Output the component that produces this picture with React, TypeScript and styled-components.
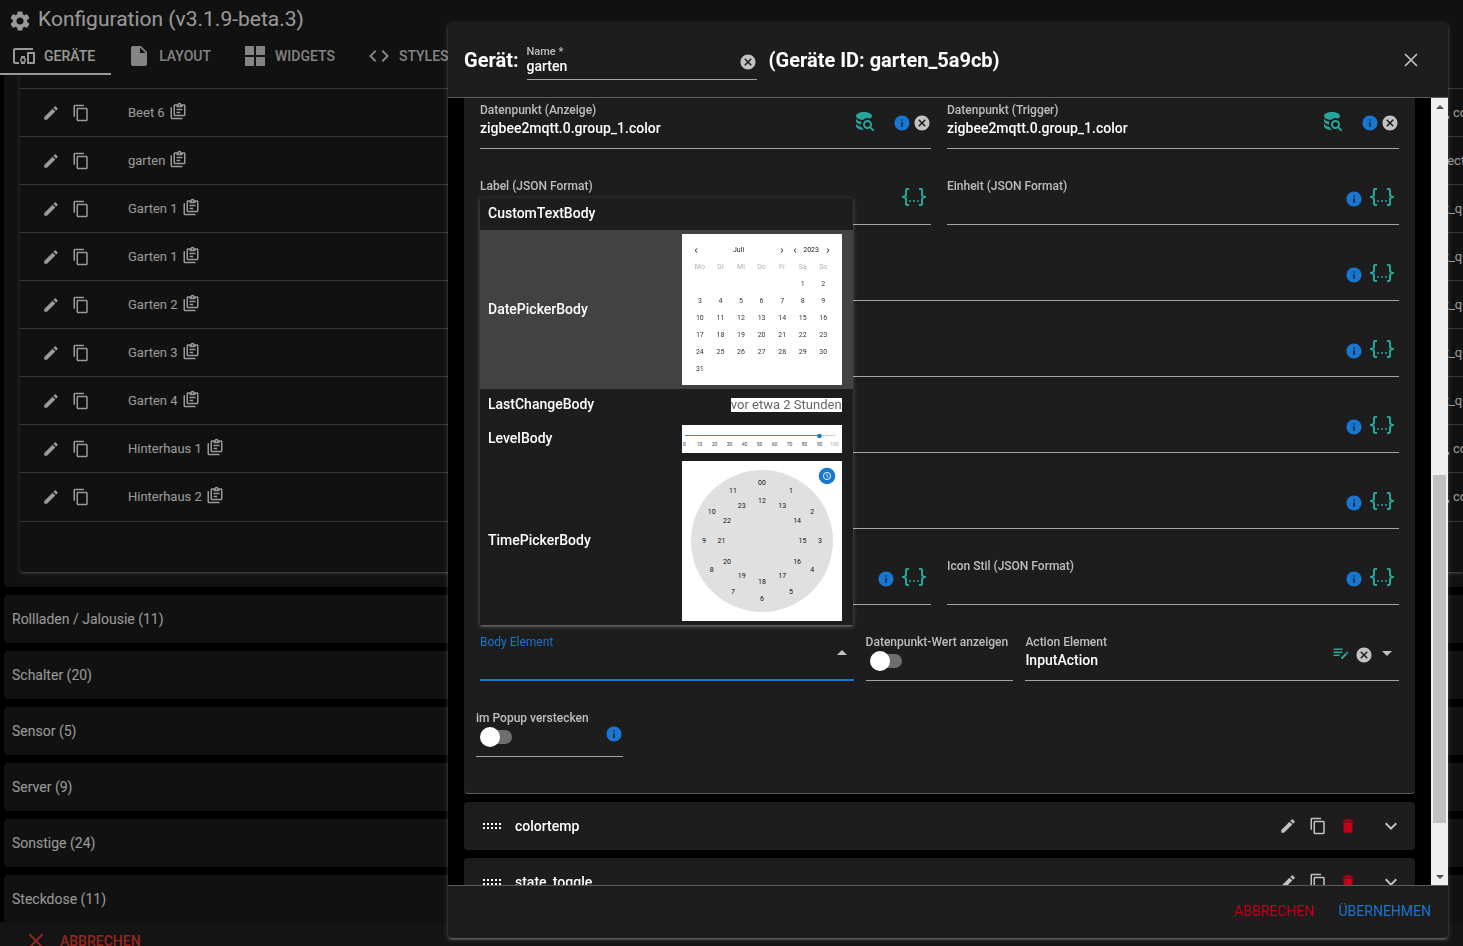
import React, { useId } from "react";
import styled, { createGlobalStyle } from "styled-components";
import {
  MdSettings,
  MdOutlineDevicesOther,
  MdInsertDriveFile,
  MdCode,
  MdEdit,
  MdContentCopy,
  MdCancel,
  MdInfo,
  MdDelete,
  MdArrowDropDown,
  MdArrowDropUp,
} from "react-icons/md";

const color = {
  surface: "#1d1d1d",
  line: "rgba(255, 255, 255, 0.28)",
  fieldLine: "rgba(255, 255, 255, 0.6)",
  label: "rgba(255, 255, 255, 0.7)",
  icon: "#c2c2c2",
  primary: "#1976d2",
  negative: "#c10015",
  teal: "#26a69a",
};

const glow =
  "0 1px 5px rgba(255,255,255,0.2), 0 2px 2px rgba(255,255,255,0.14), 0 3px 1px -2px rgba(255,255,255,0.12)";

const GlobalStyle = createGlobalStyle`
  * { box-sizing: border-box; }
  html, body, #root { height: 100%; }
  body {
    margin: 0;
    overflow: hidden;
    background: #000;
    color: #fff;
    font: 14px/20px Roboto, "Liberation Sans", sans-serif;
  }
  button, input, select { font: inherit; color: inherit; }
  svg { display: block; flex: none; }
`;

/* ---------- Icons ---------- */

const MdiIcon = ({ d, size = 24 }: { d: string; size?: number }) => (
  <svg width={size} height={size} viewBox="0 0 24 24" fill="currentColor" aria-hidden="true">
    <path d={d} />
  </svg>
);

const mdi = {
  json: "M5,3H7V5H5V10A2,2 0 0,1 3,12A2,2 0 0,1 5,14V19H7V21H5C3.93,20.73 3,20.1 3,19V15A2,2 0 0,0 1,13H0V11H1A2,2 0 0,0 3,9V5A2,2 0 0,1 5,3M19,3A2,2 0 0,1 21,5V9A2,2 0 0,0 23,11H24V13H23A2,2 0 0,0 21,15V19A2,2 0 0,1 19,21H17V19H19V14A2,2 0 0,1 21,12A2,2 0 0,1 19,10V5H17V3H19M12,15A1,1 0 0,1 13,16A1,1 0 0,1 12,17A1,1 0 0,1 11,16A1,1 0 0,1 12,15M8,15A1,1 0 0,1 9,16A1,1 0 0,1 8,17A1,1 0 0,1 7,16A1,1 0 0,1 8,15M16,15A1,1 0 0,1 17,16A1,1 0 0,1 16,17A1,1 0 0,1 15,16A1,1 0 0,1 16,15Z",
  dbSearch:
    "M18.68,12.32C16.92,10.56 14.07,10.57 12.32,12.33C10.56,14.09 10.56,16.94 12.32,18.69C13.81,20.17 16.11,20.43 17.89,19.32L21,22.39L22.39,21L19.3,17.89C20.43,16.12 20.17,13.8 18.68,12.32M17.27,17.27C16.29,18.25 14.71,18.24 13.73,17.27C12.76,16.29 12.76,14.71 13.74,13.73C14.71,12.76 16.29,12.76 17.27,13.73C18.24,14.71 18.24,16.29 17.27,17.27M10.9,20.1C10.25,19.44 9.74,18.65 9.42,17.78C6.27,17.25 4,15.76 4,14V17C4,19.21 7.58,21 12,21V21C11.6,20.74 11.23,20.44 10.9,20.1M4,9V12C4,13.68 6.07,15.12 9,15.7C9,15.63 9,15.57 9,15.5C9,14.57 9.2,13.65 9.58,12.81C6.34,12.3 4,10.79 4,9M12,3C7.58,3 4,4.79 4,7C4,9 7,10.68 10.85,11H10.9C12.1,9.74 13.76,9 15.5,9C16.41,9 17.31,9.19 18.14,9.56C19.17,9.09 19.87,8.12 20,7C20,4.79 16.42,3 12,3Z",
  textEdit:
    "M2,6V8H14V6H2M2,10V12H14V10H2M20.04,10.13C19.9,10.13 19.76,10.19 19.65,10.3L18.65,11.3L20.7,13.35L21.7,12.35C21.92,12.14 21.92,11.79 21.7,11.58L20.42,10.3C20.31,10.19 20.18,10.13 20.04,10.13M18.07,11.88L12,17.94V20H14.06L20.12,13.93L18.07,11.88M2,14V16H10V14H2Z",
  clipboard:
    "M4 7V21H18V23H4C2.9 23 2 22.1 2 21V7H4M20 3C21.1 3 22 3.9 22 5V17C22 18.1 21.1 19 20 19H8C6.9 19 6 18.1 6 17V5C6 3.9 6.9 3 8 3H11.18C11.6 1.84 12.7 1 14 1C15.3 1 16.4 1.84 16.82 3H20M14 3C13.45 3 13 3.45 13 4C13 4.55 13.45 5 14 5C14.55 5 15 4.55 15 4C15 3.45 14.55 3 14 3M10 7V5H8V17H20V5H18V7M15 15H10V13H15M18 11H10V9H18V11Z",
  viewGrid: "M2 2H11V11H2V2M13 2H22V11H13V2M2 13H11V22H2V13M13 13H22V22H13V13Z",
};

const CrossIcon = ({ size }: { size: number }) => (
  <svg width={size} height={size} viewBox="0 0 14 14" fill="none" stroke="currentColor" strokeWidth="1.7" aria-hidden="true">
    <path d="M1 1L13 13M13 1L1 13" />
  </svg>
);

const ChevronIcon = () => (
  <svg width="24" height="24" viewBox="0 0 24 24" fill="none" stroke="currentColor" strokeWidth="2" aria-hidden="true">
    <path d="M6.7 9.3L12 14.6L17.3 9.3" />
  </svg>
);

const TinyChevron = ({ next }: { next?: boolean }) => (
  <svg width="4" height="6" viewBox="0 0 4 6" fill="none" stroke="#222" aria-hidden="true">
    <path d={next ? "M0.800 0.500L3 2.500L0.800 4.500" : "M3.200 0.500L1 2.500L3.200 4.500"} />
  </svg>
);

const HandleIcon = () => (
  <svg width="18" height="6" viewBox="0 0 18 6" fill="#fff" aria-hidden="true">
    {[0, 4, 8, 12, 16].map((x) => (
      <React.Fragment key={x}>
        <rect x={x} y="0" width="2" height="2" />
        <rect x={x} y="4" width="2" height="2" />
      </React.Fragment>
    ))}
  </svg>
);

/* ---------- Page behind the dialog ---------- */

const Page = styled.div`
  display: flex;
  flex-direction: column;
  height: 100vh;
  overflow: hidden;
  background: #000;
`;

const PageHeader = styled.header`
  flex: none;
  background: ${color.surface};
`;

const PageTitle = styled.h1`
  display: flex;
  align-items: center;
  gap: 6px;
  height: 38px;
  margin: 0;
  padding-left: 8px;
  font-size: 21px;
  font-weight: 400;
  & > svg {
    margin-top: 4px;
  }
`;

const Tabs = styled.nav`
  display: flex;
  height: 37px;
`;

const Tab = styled.a<{ $active?: boolean }>`
  display: flex;
  align-items: center;
  gap: 8px;
  padding: 0 16px 0 ${(p) => (p.$active ? 12 : 16)}px;
  border-bottom: 2px solid ${(p) => (p.$active ? "#fff" : "transparent")};
  font-weight: 500;
  text-decoration: none;
  color: ${(p) => (p.$active ? "#fff" : "rgba(255, 255, 255, 0.85)")};
`;

const PageBody = styled.main`
  flex: 1;
  min-height: 0;
  overflow: hidden;
  display: flex;
  flex-direction: column;
  gap: 8px;
  padding-left: 4px;
`;

const OpenSection = styled.section`
  flex: none;
  padding: 0 0 15px 16px;
  background: ${color.surface};
  border-radius: 0 0 0 4px;
`;

const DeviceTable = styled.table`
  width: 100%;
  border-spacing: 0;
  border-radius: 0 0 0 4px;
  box-shadow: ${glow};
  font-size: 13px;
  table-layout: fixed;
`;

const Cell = styled.td<{ $h?: number }>`
  height: ${(p) => p.$h ?? 48}px;
  padding: 0;
  border-bottom: 1px solid ${color.line};
  white-space: nowrap;
  overflow: hidden;
  tr:last-child > & {
    border-bottom: 0;
  }
`;

const RowActions = styled.div`
  display: flex;
  align-items: center;
  gap: 12px;
  padding-left: 22px;
`;

const NameLine = styled.div`
  display: flex;
  align-items: center;
  gap: 4px;
  & > svg {
    margin-bottom: 4px;
  }
`;

const IconButton = styled.button<{ $color?: string }>`
  display: flex;
  padding: 0;
  border: 0;
  background: none;
  cursor: pointer;
  color: ${(p) => p.$color ?? "#fff"};
`;

const ClosedSection = styled.button`
  flex: none;
  height: 48px;
  padding: 0 8px;
  border: 0;
  border-radius: 4px 0 0 4px;
  background: ${color.surface};
  text-align: left;
`;

const PageFooter = styled.footer`
  flex: 0 0 24px;
  overflow: hidden;
  padding: 9px 28px 0;
  background: #222;
`;

const PageCancel = styled.button`
  display: flex;
  align-items: center;
  gap: 16px;
  padding: 0;
  border: 0;
  background: none;
  color: #f44336;
  font-weight: 500;
  line-height: 20px;
`;

/* ---------- Dialog ---------- */

const Backdrop = styled.div`
  position: fixed;
  inset: 0;
  display: flex;
  justify-content: flex-end;
  padding: 23px 15px 8px;
  background: rgba(0, 0, 0, 0.4);
`;

const Dialog = styled.div`
  flex: 0 1 1000px;
  min-width: 0;
  display: flex;
  flex-direction: column;
  overflow: hidden;
  border-radius: 4px;
  background: ${color.surface};
  box-shadow: ${glow};
`;

const DialogHeader = styled.header`
  flex: none;
  display: flex;
  align-items: center;
  height: 75px;
  padding: 0 30px 0 16px;
  border-bottom: 1px solid ${color.line};
`;

const DialogTitle = styled.h2`
  margin: 0;
  font-size: 20px;
  font-weight: 700;
  white-space: nowrap;
`;

const NameField = styled.div`
  display: flex;
  align-items: center;
  width: 230px;
  height: 40px;
  margin: 0 12px 0 8px;
  padding-top: 5px;
  border-bottom: 1px solid ${color.fieldLine};
`;

const NameMain = styled.div`
  flex: 1;
  display: flex;
  flex-direction: column;
  padding-bottom: 5px;
`;

const NameLabel = styled.label`
  font-size: 11px;
  line-height: 12px;
  font-weight: 500;
  color: ${color.label};
`;

const Spacer = styled.div`
  flex: 1;
`;

const DialogMain = styled.div`
  flex: 1;
  min-height: 0;
  display: flex;
  background: #000;
`;

const DialogContent = styled.div`
  flex: 1;
  min-width: 0;
  overflow: hidden;
  display: flex;
  flex-direction: column;
  gap: 8px;
  padding: 0 16px;
`;

const Panel = styled.section`
  flex: none;
  padding: 0 16px 36px;
  background: ${color.surface};
  border-bottom: 1px solid ${color.line};
  border-radius: 0 0 4px 4px;
`;

const FormGrid = styled.form`
  display: grid;
  gap: 25px 16px;
  grid-template-columns: 451fr 452fr;
`;

const Wide = styled.div`
  grid-column: 1 / -1;
`;

const ElementRow = styled.div`
  grid-column: 1 / -1;
  display: grid;
  grid-template-columns: 374fr 148fr 374fr;
  gap: 12px;
`;

const HideRow = styled.div`
  grid-column: 1 / -1;
  width: 147px;
  margin-left: -4px;
`;

const FieldBox = styled.div<{ $focused?: boolean }>`
  position: relative;
  display: flex;
  height: 51px;
  border-bottom: ${(p) => (p.$focused ? `2px solid ${color.primary}` : `1px solid ${color.fieldLine}`)};
`;

const FieldMain = styled.div`
  flex: 1;
  min-width: 0;
  display: flex;
  flex-direction: column;
  padding-top: 5px;
`;

const FieldLabel = styled.label<{ $focused?: boolean }>`
  font-size: 12px;
  line-height: 14px;
  font-weight: ${(p) => (p.$focused ? 400 : 500)};
  white-space: nowrap;
  color: ${(p) => (p.$focused ? color.primary : color.label)};
`;

const TextInput = styled.input<{ $dense?: boolean }>`
  width: 100%;
  height: ${(p) => (p.$dense ? 16 : 22)}px;
  padding: 0;
  border: 0;
  outline: 0;
  background: none;
  font-weight: 500;
`;

const SelectInput = styled.select`
  width: 100%;
  height: 22px;
  padding: 0;
  border: 0;
  outline: 0;
  appearance: none;
  background: none;
  font-weight: 500;
`;

const Adornments = styled.div<{ $gap?: number; $right?: number }>`
  display: flex;
  align-items: center;
  gap: ${(p) => p.$gap ?? 2}px;
  padding-right: ${(p) => p.$right ?? 0}px;
`;

const ArrowBox = styled.span`
  padding-bottom: 4px;
  color: ${color.icon};
`;

const TealButton = styled(IconButton)<{ $after?: number }>`
  padding-bottom: 4px;
  margin-right: ${(p) => p.$after ?? 0}px;
  color: ${color.teal};
`;

const Switch = styled.input`
  appearance: none;
  display: grid;
  align-items: center;
  width: 32px;
  height: 20px;
  margin: 2px 4px 0;
  &::before,
  &::after {
    content: "";
    grid-area: 1 / 1;
  }
  &::before {
    height: 14px;
    margin-left: 4px;
    border-radius: 7px;
    background: #6e6e6e;
  }
  &::after {
    width: 20px;
    height: 20px;
    border-radius: 50%;
    background: #fff;
  }
`;

const ToggleInfo = styled.div`
  padding-top: 19px;
`;

const Options = styled.ul`
  position: absolute;
  left: 0;
  right: 1px;
  bottom: 54px;
  margin: 0;
  padding: 0;
  list-style: none;
  background: ${color.surface};
  box-shadow: ${glow};
`;

const Option = styled.li<{ $active?: boolean }>`
  display: flex;
  align-items: center;
  justify-content: space-between;
  min-height: 32px;
  padding: 4px 11px 4px 8px;
  background: ${(p) => (p.$active ? "#424242" : "transparent")};
`;

const OptionName = styled.span`
  padding-bottom: 2px;
  font-weight: 500;
`;

const Calendar = styled.div`
  width: 160px;
  height: 151px;
  padding: 8px 8px 0;
  background: #fff;
  font-size: 7px;
  line-height: 17px;
  text-align: center;
`;

const CalendarNav = styled.div`
  display: flex;
  justify-content: space-between;
  align-items: center;
  height: 17px;
  padding: 0 4px;
`;

const NavGroup = styled.div<{ $w: number }>`
  display: flex;
  justify-content: space-between;
  align-items: center;
  width: ${(p) => p.$w}px;
  color: #222;
`;

const Days = styled.div<{ $muted?: boolean }>`
  display: grid;
  grid-template-columns: repeat(7, 1fr);
  color: ${(p) => (p.$muted ? "#b0b0b0" : "#333")};
`;

const LastChange = styled.span`
  background: #fff;
  color: #666;
  font-size: 13px;
  line-height: 14px;
`;

const SubCard = styled.section`
  flex: none;
  display: flex;
  align-items: center;
  height: 48px;
  padding: 0 12px 0 19px;
  border-radius: 4px;
  background: ${color.surface};
`;

const SubName = styled.span`
  flex: 1;
  padding-left: 14px;
  font-weight: 500;
`;

const SubActions = styled.div`
  display: flex;
  align-items: center;
  gap: 12px;
  padding-right: 22px;
`;

const ScrollRail = styled.div`
  flex: 0 0 17px;
  display: flex;
  flex-direction: column;
  align-items: center;
  background: #f0f0f0;
`;

const ScrollArrow = styled.div`
  display: flex;
  align-items: center;
  height: 17px;
`;

const ScrollThumb = styled.div`
  flex: 348;
  width: 13px;
  background: #c1c1c1;
`;

const ScrollGap = styled.div<{ $grow: number }>`
  flex: ${(p) => p.$grow};
`;

const DialogFooter = styled.footer`
  flex: none;
  display: flex;
  align-items: center;
  justify-content: flex-end;
  gap: 24px;
  height: 53px;
  padding: 0 17px 2px;
  border-top: 1px solid ${color.line};
`;

const FlatButton = styled.button<{ $color: string }>`
  padding: 0;
  border: 0;
  background: none;
  color: ${(p) => p.$color};
`;

/* ---------- Parts ---------- */

const Info = () => <MdInfo size={18} color={color.primary} />;

const Clear = () => (
  <IconButton type="button" aria-label="Leeren" $color={color.icon}>
    <MdCancel size={18} />
  </IconButton>
);

interface FieldProps {
  label: string;
  value?: string;
  children?: React.ReactNode;
}

const Field = ({ label, value = "", children }: FieldProps) => {
  const id = useId();
  return (
    <FieldBox>
      <FieldMain>
        <FieldLabel htmlFor={id}>{label}</FieldLabel>
        <TextInput id={id} defaultValue={value} />
      </FieldMain>
      {children}
    </FieldBox>
  );
};

const DatapointField = ({ label }: { label: string }) => (
  <Field label={label} value="zigbee2mqtt.0.group_1.color">
    <Adornments>
      <TealButton type="button" aria-label="Datenpunkt suchen" $after={15}>
        <MdiIcon d={mdi.dbSearch} />
      </TealButton>
      <Info />
      <Clear />
    </Adornments>
  </Field>
);

const JsonField = ({ label, info = true }: { label: string; info?: boolean }) => (
  <Field label={label}>
    <Adornments $gap={7} $right={5}>
      {info && <Info />}
      <TealButton type="button" aria-label="JSON bearbeiten">
        <MdiIcon d={mdi.json} />
      </TealButton>
    </Adornments>
  </Field>
);

const ToggleField = ({ label, info }: { label: string; info?: boolean }) => {
  const id = useId();
  return (
    <FieldBox>
      <FieldMain>
        <FieldLabel htmlFor={id}>{label}</FieldLabel>
        <Switch id={id} type="checkbox" />
      </FieldMain>
      {info && (
        <ToggleInfo>
          <Info />
        </ToggleInfo>
      )}
    </FieldBox>
  );
};

const CalendarPreview = () => (
  <Calendar>
    <CalendarNav>
      <NavGroup $w={90}>
        <TinyChevron />
        <span>Juli</span>
        <TinyChevron next />
      </NavGroup>
      <NavGroup $w={37}>
        <TinyChevron />
        <span>2023</span>
        <TinyChevron next />
      </NavGroup>
    </CalendarNav>
    <Days $muted>
      {["Mo", "Di", "Mi", "Do", "Fr", "Sa", "So"].map((d) => (
        <span key={d}>{d}</span>
      ))}
    </Days>
    <Days>
      {Array.from({ length: 36 }, (_, i) => (
        <span key={i}>{i > 4 ? i - 4 : ""}</span>
      ))}
    </Days>
  </Calendar>
);

const LevelPreview = () => (
  <svg width="160" height="28" viewBox="0 0 160 28" fontSize="5" textAnchor="middle">
    <rect width="160" height="28" fill="#fff" />
    <path d="M3 10.5H154" stroke="#bcd6f1" />
    <path d="M3 10.5H137" stroke="#3c8ad8" />
    <circle cx="137.500" cy="11" r="2.300" fill={color.primary} />
    {Array.from({ length: 11 }, (_, i) => (
      <text key={i} x={2.5 + i * 15} y="20.500" fill={i === 10 ? "#aaa" : "#444"}>
        {i * 10}
      </text>
    ))}
  </svg>
);

const ClockPreview = () => (
  <svg width="160" height="160" viewBox="0 0 160 160" fontSize="7" textAnchor="middle" fill="#111">
    <rect width="160" height="160" fill="#fff" />
    <circle cx="80" cy="80" r="71" fill="#e0e0e0" />
    {Array.from({ length: 24 }, (_, i) => {
      const r = i < 12 ? 58 : 40.5;
      const a = (i * Math.PI) / 6;
      return (
        <text key={i} x={80 + r * Math.sin(a)} y={82.3 - r * Math.cos(a)}>
          {i === 0 ? "00" : i}
        </text>
      );
    })}
    <circle cx="145" cy="15" r="8.300" fill={color.primary} />
    <circle cx="145" cy="15" r="3.600" fill="none" stroke="#fff" strokeWidth="0.900" />
    <path d="M145 12.800V15.200L146.600 16.500" fill="none" stroke="#fff" strokeWidth="0.800" />
  </svg>
);

const bodyOptions: { name: string; preview?: React.ReactNode; active?: boolean }[] = [
  { name: "CustomTextBody" },
  { name: "DatePickerBody", preview: <CalendarPreview />, active: true },
  { name: "LastChangeBody", preview: <LastChange>vor etwa 2 Stunden</LastChange> },
  { name: "LevelBody", preview: <LevelPreview /> },
  { name: "TimePickerBody", preview: <ClockPreview /> },
];

const BodyElementField = () => {
  const id = useId();
  return (
    <FieldBox $focused>
      <FieldMain>
        <FieldLabel htmlFor={id} $focused>
          Body Element
        </FieldLabel>
        <TextInput id={id} role="combobox" aria-expanded="true" aria-controls="body-options" />
      </FieldMain>
      <Adornments>
        <ArrowBox>
          <MdArrowDropUp size={24} />
        </ArrowBox>
      </Adornments>
      <Options id="body-options" role="listbox">
        {bodyOptions.map(({ name, preview, active }) => (
          <Option key={name} role="option" aria-selected={!!active} $active={active}>
            <OptionName>{name}</OptionName>
            {preview}
          </Option>
        ))}
      </Options>
    </FieldBox>
  );
};

const ActionElementField = () => {
  const id = useId();
  return (
    <FieldBox>
      <FieldMain>
        <FieldLabel htmlFor={id}>Action Element</FieldLabel>
        <SelectInput id={id}>
          <option>InputAction</option>
        </SelectInput>
      </FieldMain>
      <Adornments>
        <TealButton type="button" aria-label="Action bearbeiten" $after={3}>
          <MdiIcon d={mdi.textEdit} size={18} />
        </TealButton>
        <Clear />
        <ArrowBox>
          <MdArrowDropDown size={24} />
        </ArrowBox>
      </Adornments>
    </FieldBox>
  );
};

const SubDevice = ({ name }: { name: string }) => (
  <SubCard>
    <HandleIcon />
    <SubName>{name}</SubName>
    <SubActions>
      <IconButton aria-label="Bearbeiten" $color={color.icon}>
        <MdEdit size={18} />
      </IconButton>
      <IconButton aria-label="Kopieren" $color={color.icon}>
        <MdContentCopy size={18} />
      </IconButton>
      <IconButton aria-label="Löschen" $color={color.negative}>
        <MdDelete size={18} />
      </IconButton>
    </SubActions>
    <IconButton aria-label="Aufklappen" $color={color.icon}>
      <ChevronIcon />
    </IconButton>
  </SubCard>
);

const devices = [
  ["Beet 6", "n, color"],
  ["garten", "nect"],
  ["Garten 1", "rt_qual"],
  ["Garten 1", "rt_qual"],
  ["Garten 2", "rt_qual"],
  ["Garten 3", "rt_qual"],
  ["Garten 4", "rt_qual"],
  ["Hinterhaus 1", "n, color"],
  ["Hinterhaus 2", "n, color"],
];

const sections = [
  "Rollladen / Jalousie (11)",
  "Schalter (20)",
  "Sensor (5)",
  "Server (9)",
  "Sonstige (24)",
  "Steckdose (11)",
];

export default function App() {
  return (
    <>
      <GlobalStyle />
      <Page>
        <PageHeader>
          <PageTitle>
            <MdSettings size={24} />
            Konfiguration (v3.1.9-beta.3)
          </PageTitle>
          <Tabs>
            <Tab href="#geraete" $active>
              <MdOutlineDevicesOther size={24} />
              GERÄTE
            </Tab>
            <Tab href="#layout">
              <MdInsertDriveFile size={24} />
              LAYOUT
            </Tab>
            <Tab href="#widgets">
              <MdiIcon d={mdi.viewGrid} />
              WIDGETS
            </Tab>
            <Tab href="#styles">
              <MdCode size={24} />
              STYLES
            </Tab>
          </Tabs>
        </PageHeader>
        <PageBody>
          <OpenSection>
            <DeviceTable>
              <colgroup>
                <col width="108" />
                <col />
                <col width="23" />
              </colgroup>
              <tbody>
                <tr>
                  <Cell colSpan={3} $h={14} />
                </tr>
                {devices.map(([name, states], i) => (
                  <tr key={i}>
                    <Cell $h={i === devices.length - 1 ? 49 : 48}>
                      <RowActions>
                        <IconButton aria-label="Bearbeiten">
                          <MdEdit size={18} />
                        </IconButton>
                        <IconButton aria-label="Kopieren">
                          <MdContentCopy size={18} />
                        </IconButton>
                      </RowActions>
                    </Cell>
                    <Cell>
                      <NameLine>
                        {name}
                        <MdiIcon d={mdi.clipboard} size={18} />
                      </NameLine>
                    </Cell>
                    <Cell>{states}</Cell>
                  </tr>
                ))}
                <tr>
                  <Cell colSpan={3} $h={50} />
                </tr>
              </tbody>
            </DeviceTable>
          </OpenSection>
          {sections.map((s) => (
            <ClosedSection key={s}>{s}</ClosedSection>
          ))}
        </PageBody>
        <PageFooter>
          <PageCancel>
            <CrossIcon size={16} />
            ABBRECHEN
          </PageCancel>
        </PageFooter>
      </Page>

      <Backdrop>
        <Dialog role="dialog" aria-modal="true" aria-labelledby="dialog-title">
          <DialogHeader>
            <DialogTitle id="dialog-title">Gerät:</DialogTitle>
            <NameField>
              <NameMain>
                <NameLabel htmlFor="device-name">Name *</NameLabel>
                <TextInput id="device-name" defaultValue="garten" $dense />
              </NameMain>
              <Clear />
            </NameField>
            <DialogTitle>(Geräte ID: garten_5a9cb)</DialogTitle>
            <Spacer />
            <IconButton aria-label="Schließen" $color={color.icon}>
              <CrossIcon size={14} />
            </IconButton>
          </DialogHeader>

          <DialogMain>
            <DialogContent>
              <Panel>
                <FormGrid>
                  <DatapointField label="Datenpunkt (Anzeige)" />
                  <DatapointField label="Datenpunkt (Trigger)" />
                  <JsonField label="Label (JSON Format)" info={false} />
                  <JsonField label="Einheit (JSON Format)" />
                  {["Werte", "Text", "Farbe", "Icon"].map((l) => (
                    <Wide key={l}>
                      <JsonField label={`${l} (JSON Format)`} />
                    </Wide>
                  ))}
                  <JsonField label="Text Stil (JSON Format)" />
                  <JsonField label="Icon Stil (JSON Format)" />
                  <ElementRow>
                    <BodyElementField />
                    <ToggleField label="Datenpunkt-Wert anzeigen" />
                    <ActionElementField />
                  </ElementRow>
                  <HideRow>
                    <ToggleField label="im Popup verstecken" info />
                  </HideRow>
                </FormGrid>
              </Panel>
              <SubDevice name="colortemp" />
              <SubDevice name="state_toggle" />
            </DialogContent>
            <ScrollRail>
              <ScrollArrow>
                <svg width="8" height="4" viewBox="0 0 8 4" fill="#505050">
                  <path d="M4 0L8 4H0Z" />
                </svg>
              </ScrollArrow>
              <ScrollGap $grow={360} />
              <ScrollThumb />
              <ScrollGap $grow={45} />
              <ScrollArrow>
                <svg width="8" height="4" viewBox="0 0 8 4" fill="#505050">
                  <path d="M0 0H8L4 4Z" />
                </svg>
              </ScrollArrow>
            </ScrollRail>
          </DialogMain>

          <DialogFooter>
            <FlatButton $color={color.negative}>ABBRECHEN</FlatButton>
            <FlatButton $color={color.primary}>ÜBERNEHMEN</FlatButton>
          </DialogFooter>
        </Dialog>
      </Backdrop>
    </>
  );
}
